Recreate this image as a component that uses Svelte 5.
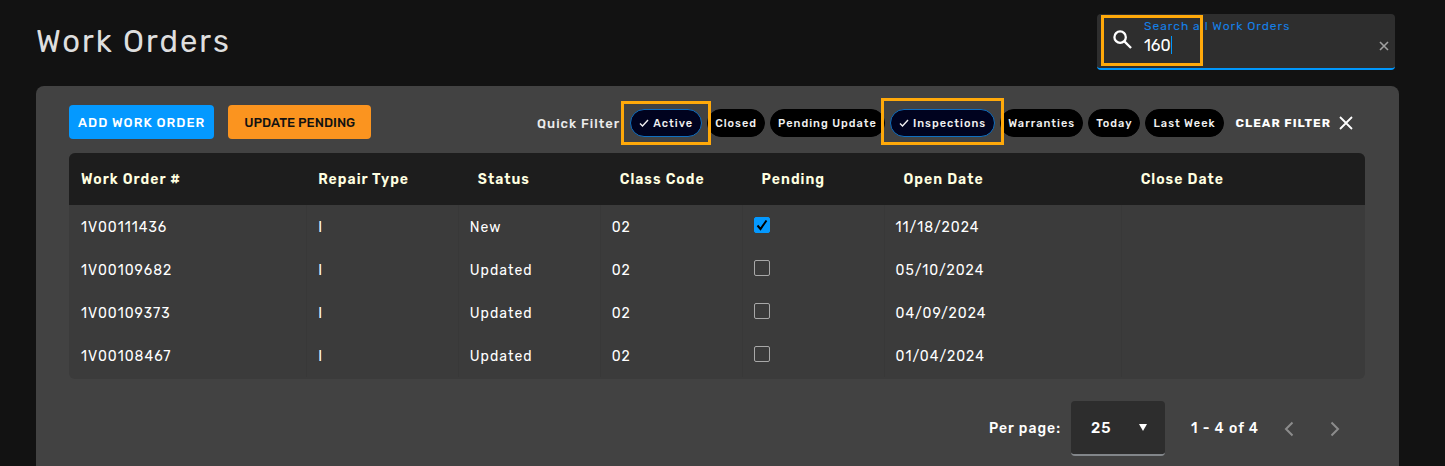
<script>
  let search = $state('160');
  let perPage = $state('25');

  let filters = $state([
    { label: 'Active', active: true, size: 'near' },
    { label: 'Closed', active: false },
    { label: 'Pending Update', active: false },
    { label: 'Inspections', active: true, size: 'wide' },
    { label: 'Warranties', active: false },
    { label: 'Today', active: false },
    { label: 'Last Week', active: false }
  ]);

  let orders = $state([
    { id: '1V00111436', type: 'I', status: 'New', code: '02', pending: true, open: '11/18/2024', close: '' },
    { id: '1V00109682', type: 'I', status: 'Updated', code: '02', pending: false, open: '05/10/2024', close: '' },
    { id: '1V00109373', type: 'I', status: 'Updated', code: '02', pending: false, open: '04/09/2024', close: '' },
    { id: '1V00108467', type: 'I', status: 'Updated', code: '02', pending: false, open: '01/04/2024', close: '' }
  ]);

  function clearFilters() {
    filters.forEach((f) => (f.active = false));
  }
</script>

<div class="page">
  <header>
    <h1>Work Orders</h1>
    <div class="search">
      <div class="callout search-callout"></div>
      <svg class="search-icon" viewBox="0 0 20 20" aria-hidden="true">
        <circle cx="7.5" cy="7.5" r="6" />
        <path d="M12 12l7 7" />
      </svg>
      <div class="search-field">
        <label for="search">Search all Work Orders</label>
        <div class="search-value">
          <input id="search" type="text" bind:value={search} />
          <span class="caret"></span>
        </div>
      </div>
      <button class="search-clear" aria-label="Clear search" onclick={() => (search = '')}>
        <svg viewBox="0 0 10 10"><path d="M1 1l8 8M9 1l-8 8" /></svg>
      </button>
    </div>
  </header>

  <main>
    <div class="toolbar">
      <div class="actions">
        <button class="add">ADD WORK ORDER</button>
        <button class="update">UPDATE PENDING</button>
      </div>
      <div class="filters">
        <span class="filters-label">Quick Filter</span>
        <div class="chips">
          {#each filters as filter}
            <div class="chip-wrap">
              <button
                class="chip"
                class:active={filter.active}
                aria-pressed={filter.active}
                onclick={() => (filter.active = !filter.active)}
              >
                {#if filter.active}
                  <svg viewBox="0 0 10 8" aria-hidden="true"><path d="M1 4.5l2.5 2.5L9 1" /></svg>
                {/if}
                {filter.label}
              </button>
              {#if filter.size}
                <div class="callout {filter.size}"></div>
              {/if}
            </div>
          {/each}
        </div>
        <button class="clear" onclick={clearFilters}>
          CLEAR FILTER
          <svg viewBox="0 0 14 14" aria-hidden="true"><path d="M1 1l12 12M13 1L1 13" /></svg>
        </button>
      </div>
    </div>

    <div class="table-wrap">
      <table>
        <colgroup>
          <col class="c-id" />
          <col class="c-type" />
          <col class="c-small" />
          <col class="c-small" />
          <col class="c-small" />
          <col class="c-date" />
          <col />
        </colgroup>
        <thead>
          <tr>
            <th>Work Order #</th>
            <th>Repair Type</th>
            <th class="inset">Status</th>
            <th class="inset">Class Code</th>
            <th class="inset">Pending</th>
            <th class="inset">Open Date</th>
            <th class="inset">Close Date</th>
          </tr>
        </thead>
        <tbody>
          {#each orders as order}
            <tr>
              <td>{order.id}</td>
              <td>{order.type}</td>
              <td>{order.status}</td>
              <td>{order.code}</td>
              <td>
                <label class="check">
                  <input type="checkbox" bind:checked={order.pending} aria-label="Pending {order.id}" />
                  {#if order.pending}
                    <svg viewBox="0 0 16 16" aria-hidden="true"><path d="M3.5 8.5l3 3.5L12.5 3.5" /></svg>
                  {/if}
                </label>
              </td>
              <td>{order.open}</td>
              <td>{order.close}</td>
            </tr>
          {/each}
        </tbody>
      </table>
    </div>

    <footer>
      <label for="per-page">Per page:</label>
      <div class="select">
        <select id="per-page" bind:value={perPage}>
          <option>25</option>
          <option>50</option>
          <option>100</option>
        </select>
        <svg viewBox="0 0 8 7" aria-hidden="true"><path d="M0 0h8L4 7z" /></svg>
      </div>
      <span class="range">1 - 4 of 4</span>
      <button class="nav" aria-label="Previous page" disabled>
        <svg viewBox="0 0 10 16"><path d="M8.5 1.5L2 8l6.5 6.5" /></svg>
      </button>
      <button class="nav" aria-label="Next page" disabled>
        <svg viewBox="0 0 10 16"><path d="M1.5 1.5L8 8l-6.5 6.5" /></svg>
      </button>
    </footer>
  </main>
</div>

<style>
  :global(body) {
    margin: 0;
    background: #121212;
  }

  .page {
    font-family: Rubik, Roboto, sans-serif;
    font-size: 14px;
    letter-spacing: 1px;
    color: #fff;
  }

  button,
  input,
  select {
    font: inherit;
    letter-spacing: inherit;
    color: inherit;
    border: none;
    padding: 0;
    margin: 0;
    background: none;
  }

  button {
    cursor: pointer;
  }

  svg {
    display: block;
    fill: none;
    stroke: currentColor;
  }

  header {
    display: flex;
    align-items: flex-start;
    justify-content: space-between;
    padding: 14px 50px 16px 36px;
  }

  h1 {
    margin: 8px 0 0;
    font-size: 31px;
    line-height: 40px;
    font-weight: 400;
    letter-spacing: 2px;
    color: #dedede;
  }

  .callout {
    position: absolute;
    border: 3px solid #ffa90a;
    pointer-events: none;
  }

  /* Search box */
  .search {
    position: relative;
    display: flex;
    align-items: center;
    box-sizing: border-box;
    width: 298px;
    height: 56px;
    padding: 0 6px 0 16px;
    background: #2e2e2e;
    border-bottom: 2px solid #0097fb;
    border-radius: 4px;
  }

  .search-callout {
    top: 1px;
    left: 4px;
    width: 96px;
    height: 45px;
  }

  .search-icon {
    width: 19px;
    height: 19px;
    margin: 0 12px 4px 0;
    stroke-width: 2.4;
  }

  .search-field {
    flex: 1;
    align-self: flex-start;
    padding-top: 4px;
  }

  .search-field label {
    display: block;
    font-size: 12px;
    line-height: 16px;
    color: #1580e8;
  }

  .search-value {
    display: flex;
    align-items: center;
    height: 22px;
  }

  .search-value input {
    field-sizing: content;
    font-size: 16px;
    letter-spacing: 0;
    outline: none;
  }

  .caret {
    flex: none;
    width: 1px;
    height: 18px;
    background: #0097fb;
  }

  .search-clear {
    padding: 9px 0 0;
    color: #a0a0a0;
  }

  .search-clear svg {
    width: 10px;
    height: 10px;
    stroke-width: 1.6;
  }

  /* Panel */
  main {
    margin: 0 46px 0 36px;
    padding: 19px 34px 10px 33px;
    background: #424242;
    border-radius: 8px 8px 0 0;
  }

  .toolbar,
  .actions,
  .filters,
  .chips {
    display: flex;
    align-items: center;
  }

  .toolbar {
    justify-content: space-between;
    margin-bottom: 14px;
  }

  .filters {
    padding-top: 2px;
  }

  .actions {
    gap: 14px;
  }

  .actions button {
    height: 34px;
    border-radius: 4px;
    font-size: 13px;
    font-weight: 500;
    white-space: nowrap;
  }

  .actions .add {
    padding: 0 9px;
    background: #0499ff;
  }

  .actions .update {
    padding: 0 16px;
    background: #fb941f;
    color: #121212;
    letter-spacing: 0;
  }

  .filters-label {
    margin-right: 10px;
    font-size: 13px;
    font-weight: 500;
    color: #ececec;
    white-space: nowrap;
  }

  .chips {
    gap: 5px;
  }

  .chip-wrap {
    position: relative;
  }

  .chip {
    display: flex;
    align-items: center;
    gap: 4px;
    box-sizing: border-box;
    height: 28px;
    padding: 0 7px;
    background: #000;
    border: 1px solid #000;
    border-radius: 14px;
    font-size: 11px;
    font-weight: 500;
    color: #f0f0f0;
    white-space: nowrap;
  }

  .chip.active {
    padding: 0 8px;
    background: #00031f;
    border-color: #0f6fc0;
  }

  .chip svg {
    width: 10px;
    height: 8px;
    stroke-width: 1.4;
  }

  .near {
    inset: -8px -9px;
    z-index: 1;
  }

  .wide {
    inset: -11px -9px -8px;
    z-index: 1;
  }

  .clear {
    display: flex;
    align-items: center;
    gap: 8px;
    margin: 0 12px;
    font-size: 12px;
    font-weight: 700;
    white-space: nowrap;
  }

  .clear svg {
    width: 14px;
    height: 14px;
    stroke-width: 1.8;
  }

  /* Work order table */
  .table-wrap {
    overflow: hidden;
    padding-bottom: 2px;
    background: #3b3b3b;
    border-radius: 6px;
  }

  table {
    width: 100%;
    table-layout: fixed;
    border-collapse: collapse;
  }

  .c-id,
  .c-date {
    width: 18.3%;
  }

  .c-type {
    width: 11.7%;
  }

  .c-small {
    width: 10.95%;
  }

  th,
  td {
    padding: 0 0 0 12px;
    text-align: left;
  }

  th {
    height: 52px;
    background: #1d1d1d;
    font-weight: 600;
    color: #ffffe0;
  }

  th.inset {
    padding-left: 20px;
  }

  td {
    box-sizing: border-box;
    height: 43px;
    padding-top: 2px;
    font-weight: 400;
  }

  td + td {
    box-shadow: inset 1px 0 #383838;
  }

  .check {
    position: relative;
    display: block;
    width: 16px;
    height: 16px;
    margin-bottom: 5px;
  }

  .check input {
    display: block;
    appearance: none;
    box-sizing: border-box;
    width: 16px;
    height: 16px;
    border: 1px solid #a8a8a8;
    border-radius: 2px;
  }

  .check input:checked {
    background: #0499ff;
    border-color: #0499ff;
  }

  .check svg {
    position: absolute;
    inset: 0;
    color: #000;
    stroke-width: 2;
    pointer-events: none;
  }

  /* Pagination */
  footer {
    display: flex;
    align-items: center;
    justify-content: flex-end;
    margin-top: 22px;
    padding-right: 16px;
    font-weight: 500;
  }

  .select {
    position: relative;
    margin: 0 26px 0 10px;
  }

  .select select {
    display: block;
    appearance: none;
    box-sizing: border-box;
    width: 94px;
    height: 55px;
    padding: 0 20px;
    background: #2d2d2d;
    border-bottom: 2px solid #82868a;
    border-radius: 4px;
    font-size: 15px;
  }

  .select svg {
    position: absolute;
    right: 18px;
    top: 23px;
    width: 8px;
    height: 7px;
    fill: #fff;
    stroke: none;
    pointer-events: none;
  }

  .range {
    margin-right: 16px;
  }

  .nav {
    display: flex;
    justify-content: center;
    width: 28px;
    color: #8c8c8c;
  }

  .nav + .nav {
    margin-left: 18px;
  }

  .nav svg {
    width: 10px;
    height: 16px;
    stroke-width: 2;
  }
</style>
